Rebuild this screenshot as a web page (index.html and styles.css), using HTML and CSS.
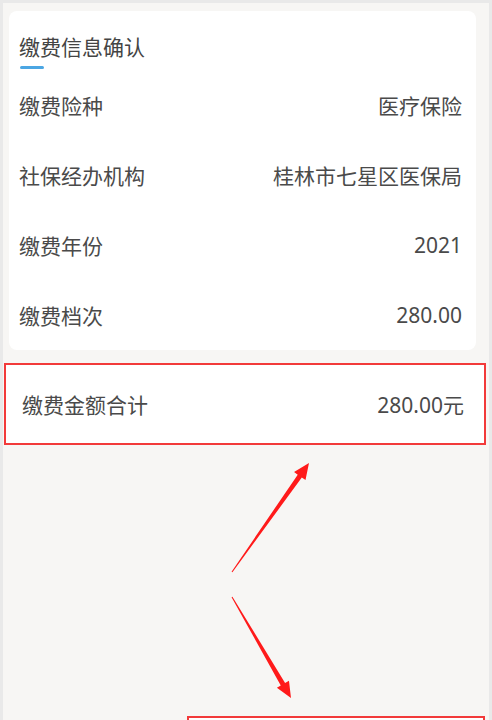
FILE: index.html
```html
<!DOCTYPE html>
<html lang="zh-CN">
<head>
<meta charset="utf-8">
<title>缴费信息确认</title>
<link rel="stylesheet" href="styles.css">
</head>
<body>
<div class="page">
  <section class="card">
    <h2 class="card-title">缴费信息确认</h2>
    <div class="title-bar"></div>
    <div class="row"><span class="label">缴费险种</span><span class="value">医疗保险</span></div>
    <div class="row"><span class="label">社保经办机构</span><span class="value">桂林市七星区医保局</span></div>
    <div class="row"><span class="label">缴费年份</span><span class="value">2021</span></div>
    <div class="row"><span class="label">缴费档次</span><span class="value">280.00</span></div>
  </section>
  <div class="total">
    <span class="label">缴费金额合计</span><span class="value">280.00元</span>
  </div>
  <div class="arrows">
    <svg class="arrow-svg" width="486" height="271" viewBox="0 0 486 271">
      <polygon fill="#ff1a1a" points="229.41,127.29 298.81,32.51 302.49,35.11 306,18 291.05,27.03 294.73,29.63 228.59,126.71"/>
      <polygon fill="#ff1a1a" points="228.57,152.25 277.77,240.44 273.89,242.71 288,253 285.97,235.65 282.09,237.92 229.43,151.75"/>
    </svg>
  </div>
  <div class="bottom-box"></div>
</div>
</body>
</html>
```

FILE: styles.css
```css
html, body {
  margin: 0;
  padding: 0;
  height: 720px;
  overflow: hidden;
  background: #e9e9e9;
}
body {
  font-family: "Noto Sans", "Noto Sans CJK SC", sans-serif;
  color: #4a4a4a;
}
.page {
  margin: 3px 3px 0 3px;
  height: 717px;
  background: #f7f6f4;
  overflow: hidden;
  padding-top: 8px;
  box-sizing: border-box;
}
.card {
  margin: 0 13px 0 6px;
  background: #ffffff;
  border-radius: 8px;
  padding: 22px 14px 0 10px;
  height: 339px;
  box-sizing: border-box;
}
.card-title {
  margin: 0;
  font-size: 21px;
  font-weight: normal;
  line-height: 28px;
  color: #444;
}
.title-bar {
  width: 24px;
  height: 3px;
  border-radius: 2px;
  background: #4ba6e3;
  margin: 5px 0 1px 1px;
}
.row {
  height: 70px;
  display: flex;
  align-items: center;
  justify-content: space-between;
  font-size: 21px;
}
.total {
  margin: 13px 3px 0 1px;
  height: 82px;
  box-sizing: border-box;
  border: 2px solid #f23a3a;
  background: #ffffff;
  display: flex;
  align-items: center;
  justify-content: space-between;
  padding: 0 20px 0 16px;
  font-size: 21px;
}
.arrows {
  position: relative;
  height: 271px;
}
.arrow-svg {
  position: absolute;
  left: 0;
  top: 0;
}
.bottom-box {
  margin-left: 184px;
  width: 298px;
  height: 40px;
  box-sizing: border-box;
  border: 2px solid #f23a3a;
  background: #ffffff;
}
```
